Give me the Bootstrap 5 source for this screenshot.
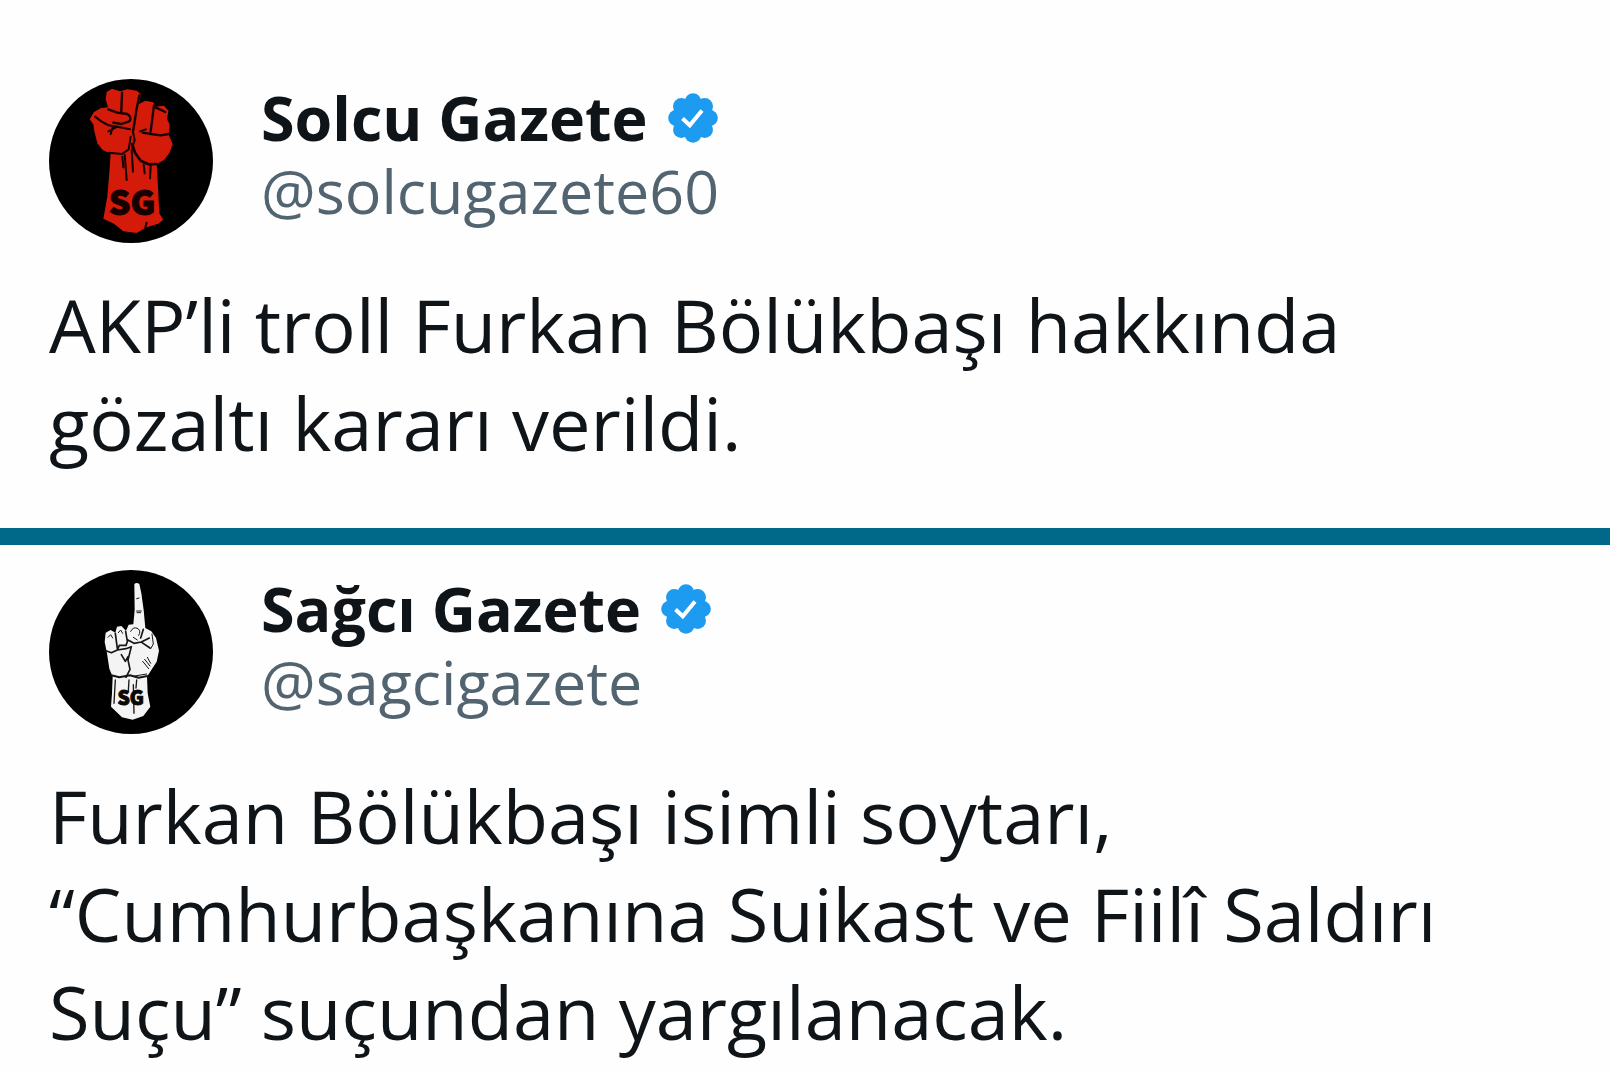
<!DOCTYPE html>
<html lang="tr">
<head>
<meta charset="utf-8">
<meta name="viewport" content="width=device-width, initial-scale=1">
<title>Solcu Gazete / Sağcı Gazete</title>
<link href="https://cdn.jsdelivr.net/npm/bootstrap@5.3.0/dist/css/bootstrap.min.css" rel="stylesheet">
<style>
body { background: #fefefe; color: #0f1419; font-family: "Open Sans", "Noto Sans", sans-serif; overflow-x: hidden; }
.post { padding: 0 49px; }
.post-first { padding-top: 79px; padding-bottom: 56px; }
.post-second { padding-top: 25px; }
.post-head { gap: 48px; }
.avatar { width: 164px; height: 164px; flex: none; }
.names { padding-top: 2px; }
.post-name { font-size: 61px; line-height: 73px; font-weight: 700; gap: 20px; }
.post-handle { font-size: 61px; line-height: 73px; color: #536471; }
.post-body { font-size: 74px; line-height: 98px; margin: 33px 0 0; }
.verified { width: 50px; height: 50px; flex: none; }
.divider { height: 17px; background: #006888; }
.sg { font-family: "Liberation Sans Narrow", "Noto Sans CJK SC", sans-serif; font-weight: 900; }
</style>
<script src="https://cdn.jsdelivr.net/npm/bootstrap@5.3.0/dist/js/bootstrap.bundle.min.js"></script>
</head>
<body>
<svg class="d-none" aria-hidden="true">
  <symbol id="badge-check" viewBox="0 0 50 50">
    <g fill="#1d9bf0"><circle cx="25" cy="25" r="20"/><circle cx="25" cy="8.500" r="8.300"/><circle cx="36.700" cy="13.300" r="8.300"/><circle cx="41.500" cy="25" r="8.300"/><circle cx="36.700" cy="36.700" r="8.300"/><circle cx="25" cy="41.500" r="8.300"/><circle cx="13.300" cy="36.700" r="8.300"/><circle cx="8.500" cy="25" r="8.300"/><circle cx="13.300" cy="13.300" r="8.300"/></g>
    <path d="M14.500 25.500 L21.800 32.300 L34 17.500" fill="none" stroke="#fff" stroke-width="4"/>
  </symbol>
</svg>

<main>
<article class="post post-first">
  <header class="post-head d-flex align-items-start">
    <svg class="avatar" viewBox="27 27 492 492" role="img" aria-label="Solcu Gazete">
      <circle cx="273" cy="273" r="246" fill="#000"/>
      <path fill="#d41a08" d="M200 66 L216 56 L240 64 L262 58 L290 62 L302 72 L297 102 L316 92 L340 97 L347 110 L372 107 L385 122 L381 148 L389 163 L386 194 L398 222 L388 250 L372 270 L350 282 L353 330 L358 430 L370 449 L355 461 L320 472 L290 489 L250 484 L222 461 L190 446 L202 380 L207 320 L212 251 L188 240 L172 220 L163 184 L160 163 L149 148 L162 126 L182 115 L204 112 L197 88 Z"/>
      <g fill="none" stroke="#160000" stroke-linecap="round" stroke-linejoin="round">
        <path stroke-width="7" d="M205 118 L232 128 L262 132 Q277 142 268 154 L244 162 L220 158 M246 68 L244 124 M298 76 L290 116 L280 180 M342 106 L332 184 M346 112 L376 126 M385 192 L362 196 L334 192 L308 188"/>
        <path stroke-width="6" d="M165 140 L184 154 L206 166 L232 170 L270 178 M232 170 L205 184 M206 166 L194 160 M218 172 L212 192 M278 182 L284 210 L276 236 M300 184 L318 178 M206 248 L246 252 L266 238 L272 200"/>
        <path stroke-width="8" d="M276 222 L286 250 L302 272 L326 283 L350 282"/>
        <path stroke-width="6" d="M254 254 L260 330 M275 240 L279 305 M311 284 L314 310 M332 288 L330 325 M247 260 L250 292 M314 480 L320 458"/>
      </g>
      <text class="sg" x="276" y="434" font-size="102" text-anchor="middle" fill="#160000" stroke="#160000" stroke-width="3">SG</text>
    </svg>
    <div class="names">
      <h1 class="post-name d-flex align-items-center m-0">Solcu Gazete <svg class="verified" role="img" aria-label="Onaylı hesap"><use href="#badge-check"/></svg></h1>
      <div class="post-handle">@solcugazete60</div>
    </div>
  </header>
  <p class="post-body">AKP’li troll Furkan Bölükbaşı hakkında<br>gözaltı kararı verildi.</p>
</article>

<div class="divider"></div>

<article class="post post-second">
  <header class="post-head d-flex align-items-start">
    <svg class="avatar" viewBox="27 30 492 492" role="img" aria-label="Sağcı Gazete">
      <circle cx="273" cy="276" r="246" fill="#000"/>
      <path fill="#f4f4f4" d="M283 72 Q290 66 298 72 L304 100 L311 150 L316 204 L334 214 L348 234 L357 272 L350 305 L334 330 L321 350 L323 400 L331 440 L310 468 L278 479 L246 472 L213 440 L216 400 L218 350 L208 326 L201 280 L194 246 L197 218 L212 210 L226 218 L231 200 L244 198 L258 212 L266 194 L280 193 L284 150 Z"/>
      <g fill="none" stroke="#161616" stroke-linecap="round" stroke-linejoin="round">
        <path stroke-width="5" d="M198 272 L214 278 L232 270 L238 256 L258 256 L264 240 L282 250 L304 246 L328 234 M226 220 L232 266 M257 214 L262 244 M310 208 L302 234 M232 270 L258 266 L274 260 L264 300 L270 328 L258 352 M306 248 L330 264 M244 284 L256 304 L264 290"/>
        <path stroke-width="3" d="M204 232 L212 224 L218 234 M235 218 L242 210 L248 220 M272 214 Q280 198 294 206 Q304 214 296 226 M280 232 L292 240 M290 116 L297 114 M290 153 L304 153 M291 158 L302 158 M336 222 L340 252 L332 266 M322 292 L332 310 M308 304 L326 326 M314 298 L330 318 M284 348 L320 342"/>
        <path stroke-width="6" d="M214 346 L238 352 L270 346 L296 353 L322 348"/>
        <path stroke-width="4" d="M267 360 L265 392 M280 374 L282 460 M226 360 L222 430 M290 360 L288 384"/>
      </g>
      <text class="sg" x="272" y="434" font-size="58" text-anchor="middle" fill="#080808" stroke="#080808" stroke-width="3">SG</text>
    </svg>
    <div class="names">
      <h2 class="post-name d-flex align-items-center m-0">Sağcı Gazete <svg class="verified" role="img" aria-label="Onaylı hesap"><use href="#badge-check"/></svg></h2>
      <div class="post-handle">@sagcigazete</div>
    </div>
  </header>
  <p class="post-body">Furkan Bölükbaşı isimli soytarı,<br>“Cumhurbaşkanına Suikast ve Fiilî Saldırı<br>Suçu” suçundan yargılanacak.</p>
</article>
</main>
</body>
</html>
